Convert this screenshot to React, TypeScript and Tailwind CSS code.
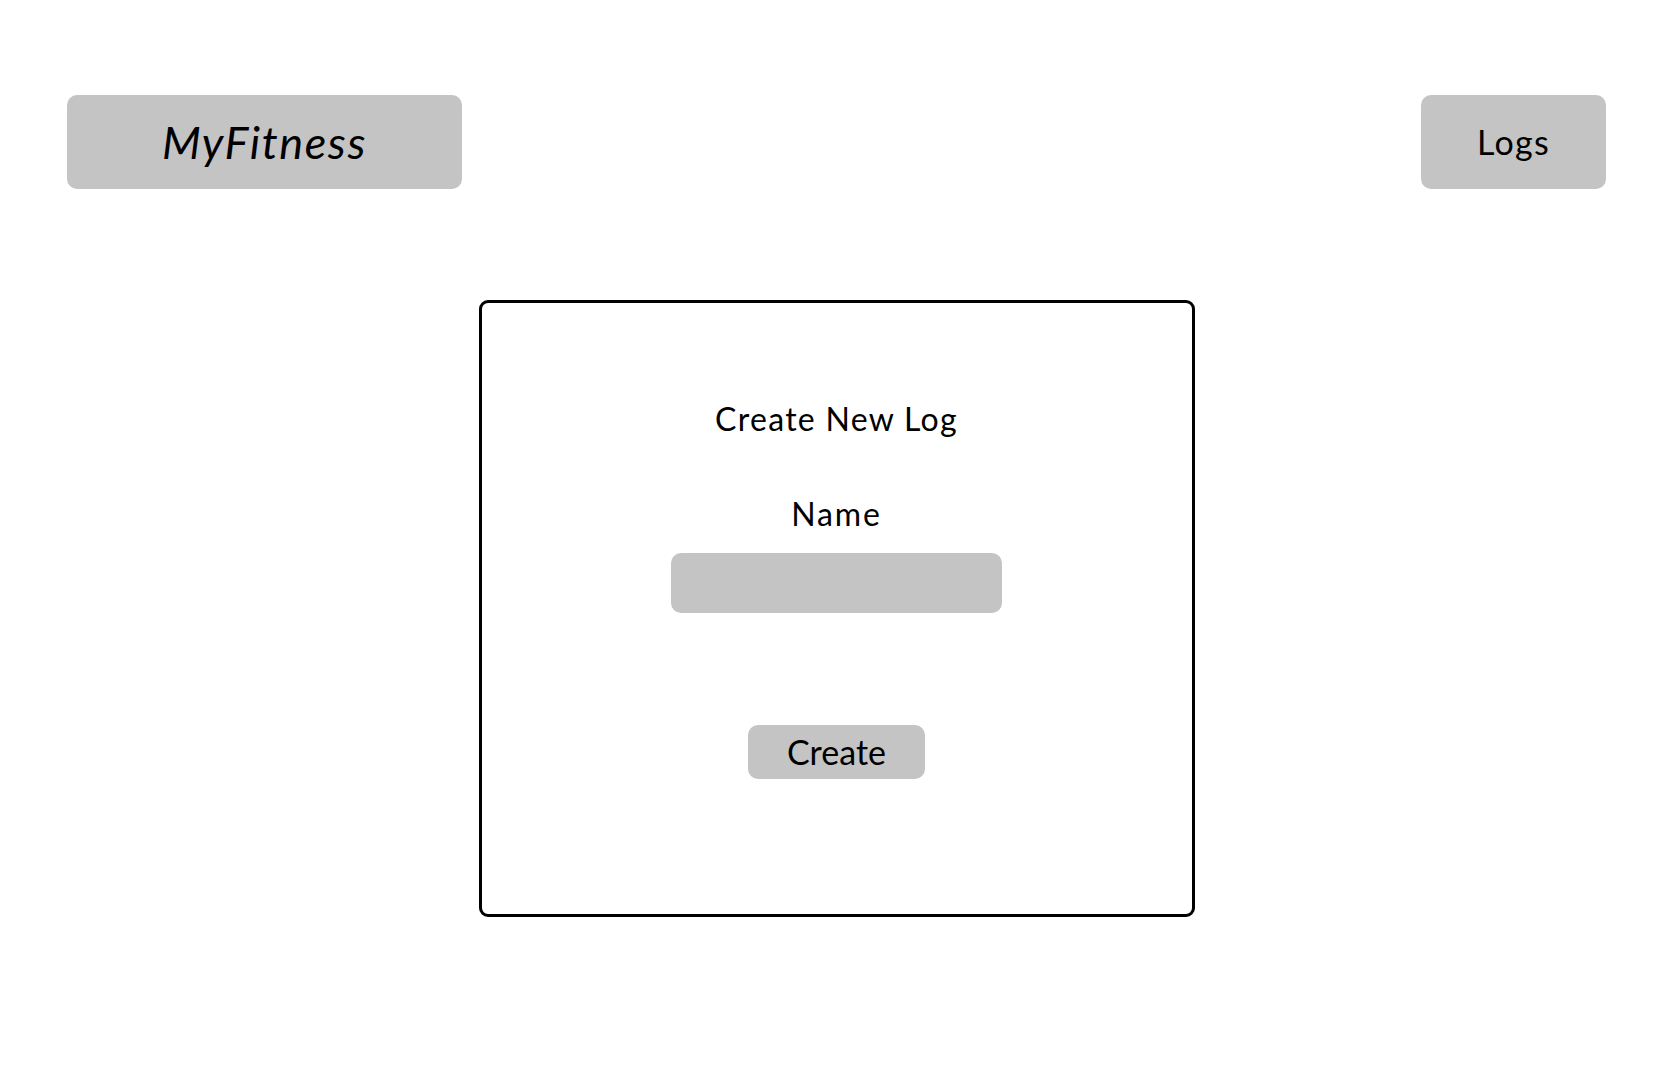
export default function App() {
  return (
    <div
      className="min-h-screen w-full bg-white text-black"
      style={{ fontFamily: "Lato, 'Open Sans', sans-serif" }}
    >
      {/* Top bar */}
      <header className="flex items-start justify-between pl-[67px] pr-[66px] pt-[95px]">
        <div className="flex h-[94px] w-[395px] items-center justify-center rounded-[10px] bg-[#c4c4c4]">
          <span className="text-[45px] italic leading-none tracking-[1.6px]">MyFitness</span>
        </div>
        <button className="flex h-[94px] w-[185px] items-center justify-center rounded-[10px] bg-[#c4c4c4]">
          <span className="text-[34px] leading-none tracking-[1.3px]">Logs</span>
        </button>
      </header>

      {/* Create log card */}
      <main className="mt-[111px] flex justify-center pl-px">
        <div className="flex h-[617px] w-[716px] flex-col items-center rounded-[9px] border-[3px] border-black pt-[97px]">
          <h2 className="h-[38px] text-[32px] leading-[38px] tracking-[1.3px]">Create New Log</h2>
          <label className="mt-[57px] h-[38px] text-[32px] leading-[38px] tracking-[1.8px]">Name</label>
          <div className="mt-[20px] h-[60px] w-[331px] rounded-[10px] bg-[#c4c4c4]" />
          <button className="mt-[112px] flex h-[54px] w-[177px] items-center justify-center rounded-[10px] bg-[#c4c4c4]">
            <span className="text-[34px] leading-none">Create</span>
          </button>
        </div>
      </main>
    </div>
  );
}
